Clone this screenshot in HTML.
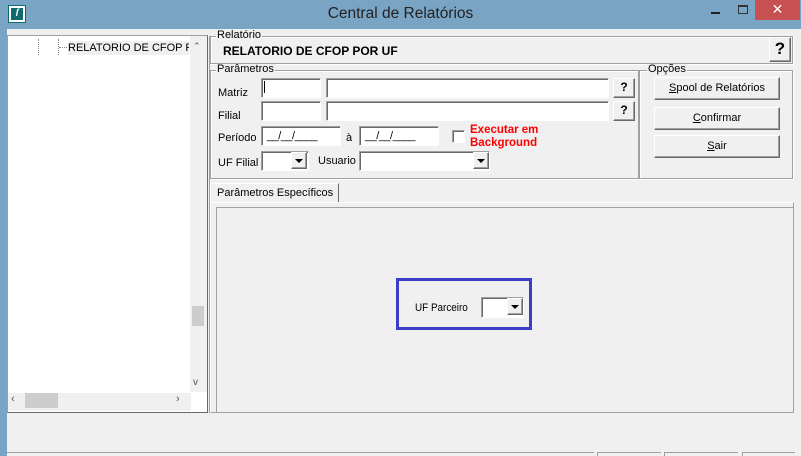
<!DOCTYPE html>
<html><head><meta charset="utf-8"><style>
*{box-sizing:border-box;margin:0;padding:0}
body{width:801px;height:456px;overflow:hidden;background:#f0f0f0;font-family:"Liberation Sans",sans-serif;font-size:11px;color:#000;position:relative}
.a{position:absolute}
.title{left:0;top:0;width:801px;height:29px;background:#79a4c4}
.frame{left:0;top:29px;width:7px;height:427px;background:#79a4c4}
.in{background:#fff;border:1px solid;border-color:#a0a0a0 #fff #fff #a0a0a0;box-shadow:inset 1px 1px 0 #696969}
.btn{background:#f0f0f0;border:1px solid;border-color:#fff #696969 #696969 #fff;box-shadow:inset -1px -1px 0 #a0a0a0;text-align:center}
.grp{border:1px solid #a0a0a0;box-shadow:1px 1px 0 #fff inset,1px 1px 0 #fff}
.lg{background:#f0f0f0;padding:0 1px;font-size:11px;line-height:11px}
.dd{width:16px;height:17px}
.tri{width:0;height:0;border-left:4px solid transparent;border-right:4px solid transparent;border-top:4px solid #000}
</style></head><body>
<div class="a title"></div>
<div class="a" style="left:9px;top:6px;width:16px;height:16px;background:#0e6a6e;border:2px solid #fff;outline:1px solid #0e6a6e"><div style="color:#fff;font-weight:bold;font-size:10px;line-height:12px;text-align:center;font-style:italic">ſ</div></div>
<div class="a" style="left:0;top:5px;width:801px;text-align:center;font-size:15.5px;color:#222">Central de Relatórios</div>
<div class="a" style="left:711px;top:12px;width:9px;height:2px;background:#222"></div>
<div class="a" style="left:738px;top:5px;width:10px;height:9px;border:1px solid #333;border-top-width:2px"></div>
<div class="a" style="left:755px;top:0;width:45px;height:20px;background:#c75050;color:#fff;text-align:center;font-size:14px;line-height:18px">✕</div>
<div class="a frame"></div>
<div class="a" style="left:795px;top:29px;width:6px;height:427px;background:#f0f0f0"></div>

<!-- tree -->
<div class="a" style="left:7px;top:35px;width:201px;height:378px;border:1px solid;border-color:#a0a0a0 #696969 #696969 #a0a0a0;background:#fff"></div>
<div class="a" style="left:38px;top:39px;width:1px;height:16px;border-left:1px dotted #888"></div>
<div class="a" style="left:58px;top:39px;width:1px;height:16px;border-left:1px dotted #888"></div>
<div class="a" style="left:59px;top:47px;width:8px;border-top:1px dotted #888"></div>
<div class="a" style="left:68px;top:41px;width:121px;height:14px;background:#f0f0f0;font-size:11px;line-height:14px;white-space:nowrap;overflow:hidden">RELATORIO DE CFOP POR UF</div>
<div class="a" style="left:190px;top:36px;width:17px;height:356px;background:#f0f0f0"></div>
<div class="a" style="left:192px;top:306px;width:12px;height:20px;background:#cdcdcd"></div>
<div class="a" style="left:193px;top:41px;font-size:9px;color:#555">⌃</div>
<div class="a" style="left:193px;top:377px;font-size:10px;color:#555">v</div>
<div class="a" style="left:8px;top:393px;width:183px;height:18px;background:#f0f0f0"></div>
<div class="a" style="left:25px;top:393px;width:33px;height:15px;background:#cdcdcd"></div>
<div class="a" style="left:11px;top:393px;font-size:11px;color:#555">‹</div>
<div class="a" style="left:176px;top:393px;font-size:11px;color:#555">›</div>
<div class="a" style="left:208px;top:36px;width:2px;height:377px;border-right:1px solid #a0a0a0"></div>

<!-- Relatorio -->
<div class="a grp" style="left:210px;top:36px;width:583px;height:28px"></div>
<div class="a lg" style="left:216px;top:30px">Relatório</div>
<div class="a" style="left:223px;top:44px;font-weight:bold;font-size:12px">RELATORIO DE CFOP POR UF</div>
<div class="a btn" style="left:769px;top:37px;width:22px;height:25px;font-weight:bold;font-size:17px;line-height:22px">?</div>

<!-- Parametros -->
<div class="a grp" style="left:210px;top:70px;width:429px;height:109px"></div>
<div class="a lg" style="left:216px;top:64px">Parâmetros</div>
<div class="a" style="left:218px;top:87px">Matriz</div>
<div class="a in" style="left:261px;top:78px;width:60px;height:20px"></div>
<div class="a" style="left:264px;top:81px;width:1px;height:12px;background:#000"></div>
<div class="a in" style="left:326px;top:78px;width:283px;height:20px"></div>
<div class="a btn" style="left:613px;top:78px;width:22px;height:20px;font-weight:bold;font-size:12px;line-height:17px">?</div>
<div class="a" style="left:218px;top:110px">Filial</div>
<div class="a in" style="left:261px;top:101px;width:60px;height:20px"></div>
<div class="a in" style="left:326px;top:101px;width:283px;height:20px"></div>
<div class="a btn" style="left:613px;top:101px;width:22px;height:20px;font-weight:bold;font-size:12px;line-height:17px">?</div>
<div class="a" style="left:218px;top:132px">Período</div>
<div class="a in" style="left:261px;top:126px;width:80px;height:20px;padding:3px 0 0 5px;letter-spacing:-0.5px">__/__/____</div>
<div class="a" style="left:346px;top:132px">à</div>
<div class="a in" style="left:359px;top:126px;width:80px;height:20px;padding:3px 0 0 5px;letter-spacing:-0.5px">__/__/____</div>
<div class="a in" style="left:452px;top:130px;width:13px;height:13px;background:#fff"></div>
<div class="a" style="left:470px;top:124px;color:#f00;font-weight:bold;font-size:11.5px;line-height:13px">Executar em<br>Background</div>
<div class="a" style="left:218px;top:157px">UF Filial</div>
<div class="a in" style="left:261px;top:151px;width:48px;height:20px"></div>
<div class="a btn dd" style="left:291px;top:152px"><div class="tri" style="margin:6px 0 0 3px"></div></div>
<div class="a" style="left:318px;top:155px">Usuario</div>
<div class="a in" style="left:359px;top:151px;width:131px;height:20px"></div>
<div class="a btn dd" style="left:473px;top:152px"><div class="tri" style="margin:6px 0 0 3px"></div></div>

<!-- Opcoes -->
<div class="a grp" style="left:639px;top:70px;width:154px;height:109px"></div>
<div class="a lg" style="left:647px;top:64px">Opções</div>
<div class="a btn" style="left:654px;top:77px;width:126px;height:23px;line-height:20px"><u>S</u>pool de Relatórios</div>
<div class="a btn" style="left:654px;top:107px;width:126px;height:23px;line-height:20px"><u>C</u>onfirmar</div>
<div class="a btn" style="left:654px;top:135px;width:126px;height:23px;line-height:20px"><u>S</u>air</div>

<!-- tab -->
<div class="a" style="left:210px;top:183px;width:129px;height:20px;border:1px solid;border-color:#fff #696969 transparent #fff;background:#f0f0f0;padding:3px 0 0 6px">Parâmetros Específicos</div>
<div class="a" style="left:210px;top:202px;width:584px;height:211px;border:1px solid;border-color:#fff #a0a0a0 #a0a0a0 #fff"></div>
<div class="a" style="left:216px;top:207px;width:578px;height:205px;border-left:1px solid #a0a0a0;border-top:1px solid #a0a0a0;border-right:1px solid #a0a0a0"></div>

<div class="a" style="left:396px;top:278px;width:136px;height:52px;border:3px solid #3b3ec8"></div>
<div class="a" style="left:415px;top:302px;font-size:11px;transform:scaleX(0.9);transform-origin:left">UF Parceiro</div>
<div class="a in" style="left:481px;top:297px;width:43px;height:21px"></div>
<div class="a btn dd" style="left:507px;top:298px"><div class="tri" style="margin:6px 0 0 3px"></div></div>

<!-- status -->
<div class="a" style="left:7px;top:452px;width:587px;height:4px;border-top:1px solid #a0a0a0"></div>
<div class="a" style="left:597px;top:452px;width:64px;height:4px;border-top:1px solid #a0a0a0;border-left:1px solid #a0a0a0"></div>
<div class="a" style="left:664px;top:452px;width:74px;height:4px;border-top:1px solid #a0a0a0;border-left:1px solid #a0a0a0"></div>
<div class="a" style="left:742px;top:452px;width:53px;height:4px;border-top:1px solid #a0a0a0;border-left:1px solid #a0a0a0"></div>
</body></html>
